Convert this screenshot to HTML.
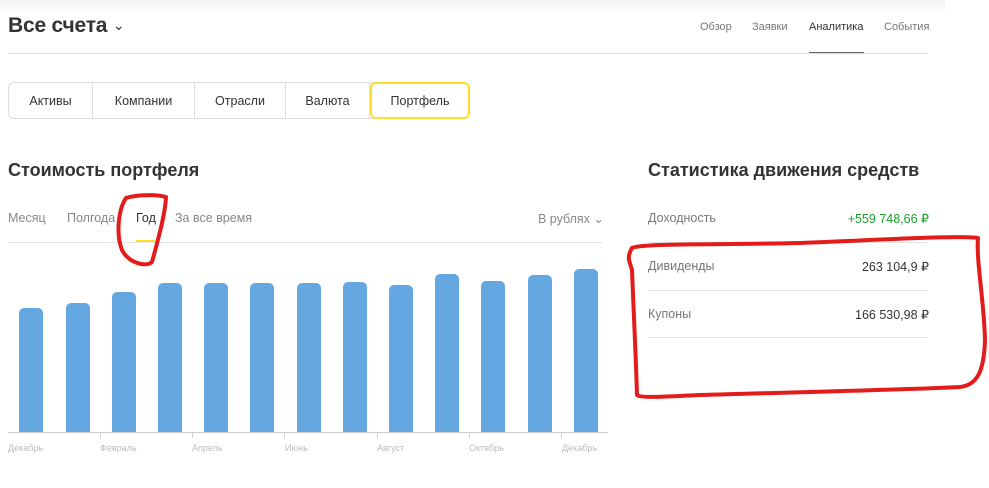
<!DOCTYPE html>
<html><head><meta charset="utf-8"><style>
*{margin:0;padding:0;box-sizing:border-box}
body{width:989px;height:488px;background:#fff;font-family:"Liberation Sans",sans-serif;position:relative;overflow:hidden;color:#333}
.a{position:absolute;white-space:nowrap}
.top{position:absolute;left:0;top:0;width:945px;height:14px;background:linear-gradient(#f2f2f2,#fff)}
.tabs{position:absolute;left:8px;top:82px;height:37px;display:flex;border:1px solid #ddd;border-radius:6px;font-size:12.5px;color:#333}
.tabs div{display:flex;align-items:center;justify-content:center;border-right:1px solid #ddd}
.tabs .s{border:2px solid #ffdd2d;border-radius:6px;margin:-1px -1px -1px 0}
.bar{position:absolute;width:24px;background:#65a7e0;border-radius:5px 5px 0 0;bottom:56px}
.lbl{position:absolute;top:443px;font-size:9px;color:#bbb}
.tick{position:absolute;top:432px;width:1px;height:6px;background:#ccc}
.t{font-size:12.5px}
</style></head><body>
<div class="top"></div>
<div class="a" style="left:8px;top:14px;font-size:21px;font-weight:bold;color:#333;letter-spacing:-0.2px">Все счета <span style="font-size:14px;font-weight:normal;position:relative;top:-2px">⌄</span></div>
<div class="a" style="left:700px;top:21px;font-size:11px;color:#777">Обзор</div>
<div class="a" style="left:752px;top:21px;font-size:11px;color:#777">Заявки</div>
<div class="a" style="left:809px;top:21px;font-size:11px;color:#333">Аналитика</div>
<div class="a" style="left:884px;top:21px;font-size:11px;color:#777">События</div>
<div class="a" style="left:809px;top:52px;width:55px;height:2px;background:#666"></div>
<div class="a" style="left:8px;top:53px;width:920px;height:1px;background:#ddd"></div>
<div class="tabs">
<div style="width:84px">Активы</div>
<div style="width:102px">Компании</div>
<div style="width:91px">Отрасли</div>
<div style="width:84px">Валюта</div>
<div class="s" style="width:100px">Портфель</div>
</div>
<div class="a" style="left:8px;top:160px;font-size:18px;font-weight:bold;color:#333">Стоимость портфеля</div>
<div class="a t" style="left:8px;top:211px;color:#888">Месяц</div>
<div class="a t" style="left:67px;top:211px;color:#888">Полгода</div>
<div class="a t" style="left:136px;top:211px;color:#333">Год</div>
<div class="a t" style="left:175px;top:211px;color:#888">За все время</div>
<div class="a t" style="left:538px;top:211px;color:#888">В рублях ⌄</div>
<div class="a" style="left:136px;top:240px;width:19px;height:2px;background:#ffdd2d"></div>
<div class="a" style="left:8px;top:242px;width:594px;height:1px;background:#e5e5e5"></div>
<div class="bar" style="left:19px;height:124px"></div>
<div class="bar" style="left:66px;height:129px"></div>
<div class="bar" style="left:112px;height:140px"></div>
<div class="bar" style="left:158px;height:149px"></div>
<div class="bar" style="left:204px;height:149px"></div>
<div class="bar" style="left:250px;height:149px"></div>
<div class="bar" style="left:297px;height:149px"></div>
<div class="bar" style="left:343px;height:150px"></div>
<div class="bar" style="left:389px;height:147px"></div>
<div class="bar" style="left:435px;height:158px"></div>
<div class="bar" style="left:481px;height:151px"></div>
<div class="bar" style="left:528px;height:157px"></div>
<div class="bar" style="left:574px;height:163px"></div>
<div class="a" style="left:8px;top:432px;width:600px;height:1px;background:#ccc"></div>
<div class="tick" style="left:100px"></div><div class="tick" style="left:192px"></div><div class="tick" style="left:284px"></div><div class="tick" style="left:377px"></div><div class="tick" style="left:469px"></div><div class="tick" style="left:561px"></div>
<div class="lbl" style="left:8px">Декабрь</div><div class="lbl" style="left:100px">Февраль</div><div class="lbl" style="left:192px">Апрель</div><div class="lbl" style="left:285px">Июнь</div><div class="lbl" style="left:377px">Август</div><div class="lbl" style="left:469px">Октябрь</div><div class="lbl" style="left:562px">Декабрь</div>
<div class="a" style="left:648px;top:160px;font-size:18px;font-weight:bold;color:#333">Статистика движения средств</div>
<div class="a t" style="left:648px;top:211px;color:#777">Доходность</div>
<div class="a t" style="left:648px;top:211px;width:281px;text-align:right;color:#1a9f29">+559 748,66 ₽</div>
<div class="a" style="left:648px;top:242px;width:280px;height:1px;background:#e5e5e5"></div>
<div class="a t" style="left:648px;top:259px;color:#777">Дивиденды</div>
<div class="a t" style="left:648px;top:259px;width:281px;text-align:right;color:#333">263 104,9 ₽</div>
<div class="a" style="left:648px;top:290px;width:280px;height:1px;background:#e5e5e5"></div>
<div class="a t" style="left:648px;top:307px;color:#777">Купоны</div>
<div class="a t" style="left:648px;top:307px;width:281px;text-align:right;color:#333">166 530,98 ₽</div>
<div class="a" style="left:648px;top:337px;width:280px;height:1px;background:#e5e5e5"></div>
<svg class="a" style="left:0;top:0" width="989" height="488" fill="none" stroke="#e31b1b" stroke-width="4" stroke-linecap="round" stroke-linejoin="round">
<path d="M126 198 C118 210 116 235 122 250 C128 262 145 268 152 262 C158 240 165 215 166 197 C155 194 135 195 126 198"/>
<path d="M632 248 C640 243 720 245 800 243 C880 240 960 235 978 238 C976 260 984 300 985 340 C984 370 978 385 960 387 C900 390 800 392 700 395 C660 397 640 398 637 395 C636 360 634 320 632 270 C630 262 626 258 632 248"/>
</svg>
</body></html>
